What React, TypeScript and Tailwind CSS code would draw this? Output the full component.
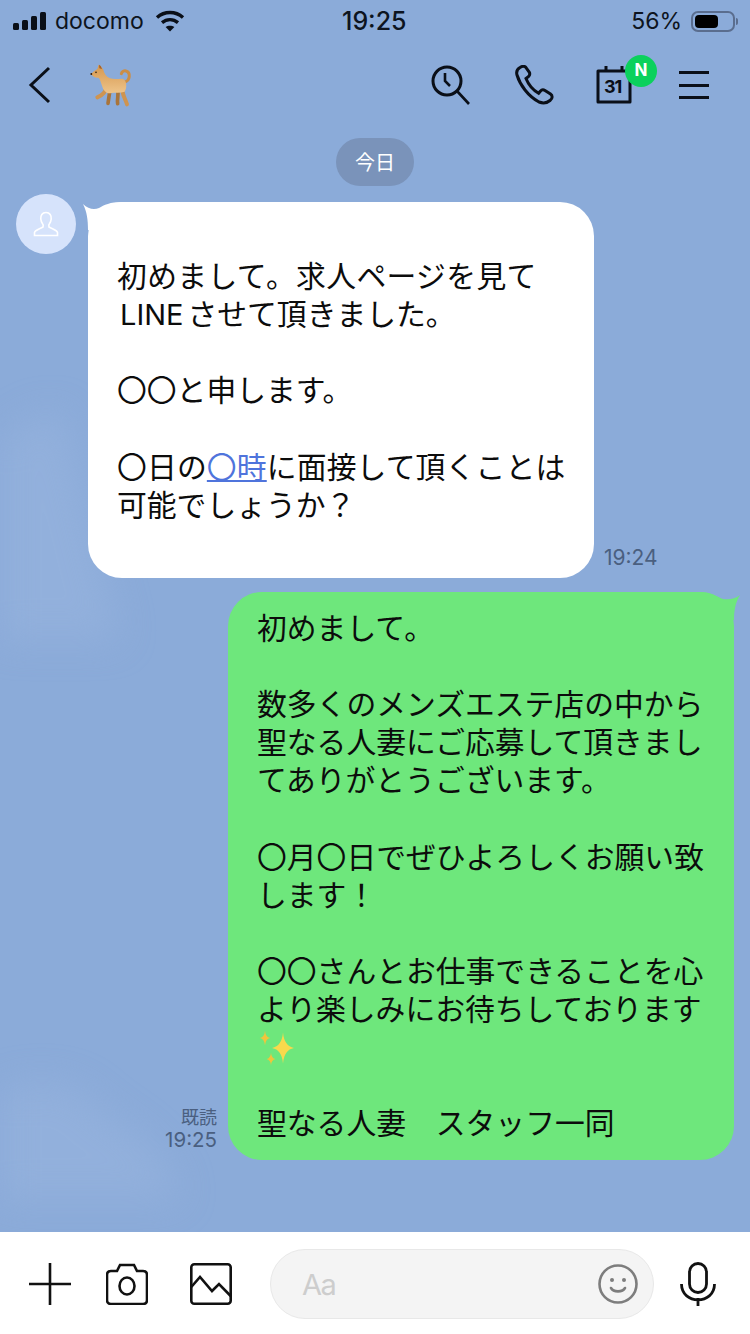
const JP = "font-['Noto_Sans_CJK_JP','Noto_Sans',sans-serif]"

const INCOMING: React.ReactNode[] = [
  '\u00a0',
  <span className="tracking-[0.35px]">初めまして。求人ページを見て</span>,
  <><span className="ml-[3px] mr-[4px] font-['Inter',sans-serif] text-[29px] leading-none">LINE</span>させて頂きました。</>,
  '\u00a0',
  '〇〇と申します。',
  '\u00a0',
  <span className="tracking-[0.15px]">〇日の<span className="text-[#4f74dc] underline underline-offset-2">〇時</span>に面接して頂くことは</span>,
  '可能でしょうか？',
  '\u00a0',
]

const OUTGOING: React.ReactNode[] = [
  '初めまして。',
  '\u00a0',
  '数多くのメンズエステ店の中から',
  '聖なる人妻にご応募して頂きまし',
  'てありがとうございます。',
  '\u00a0',
  '〇月〇日でぜひよろしくお願い致',
  'します！',
  '\u00a0',
  '〇〇さんとお仕事できることを心',
  'より楽しみにお待ちしております',
  <Sparkles />,
  '\u00a0',
  '聖なる人妻　スタッフ一同',
]

function Sparkles() {
  const star = 'M0 -14 Q1.1 -1.6 10 0 Q1.1 1.6 0 14 Q-1.1 1.6 -10 0 Q-1.1 -1.6 0 -14Z'
  return (
    <svg width="40" height="38" viewBox="0 0 40 38" className="block overflow-visible">
      <path d={star} transform="translate(26 22) scale(1.1)" fill="#f9d94c" />
      <path d={star} transform="translate(8 12) scale(.52)" fill="#f0c53c" />
      <path d={star} transform="translate(14 33) scale(.45)" fill="#f0c53c" />
    </svg>
  )
}

function StatusBar() {
  return (
    <div className="relative flex h-[42px] items-center justify-between pl-[13px] pr-[12px] font-['Inter',sans-serif] text-[#0d1420]">
      <div className="flex items-center">
        <svg width="34" height="18" viewBox="0 0 34 18" fill="#0a0f18">
          <rect x="0" y="11" width="6" height="7" rx="1.5" />
          <rect x="9" y="8" width="6" height="10" rx="1.5" />
          <rect x="18" y="4" width="6" height="14" rx="1.5" />
          <rect x="27" y="0" width="6" height="18" rx="1.5" />
        </svg>
        <span className="ml-[8px] text-[23px] leading-none">docomo</span>
        <svg width="30" height="22" viewBox="0 0 30 22" className="ml-[11px]" fill="none" stroke="#0a0f18" strokeWidth="3.4">
          <path d="M2 7.5 C9.5 0.8 20.5 0.8 28 7.5" />
          <path d="M7 12.6 C11.8 8.6 18.2 8.6 23 12.6" />
          <path d="M15 21.5 L10.6 17 C13 15.2 17 15.2 19.4 17Z" fill="#0a0f18" stroke="none" />
        </svg>
      </div>
      <span className="absolute left-[342px] text-[25px] font-medium leading-none">19:25</span>
      <div className="flex items-center">
        <span className="text-[23px] leading-none">56%</span>
        <div className="ml-[9px] flex h-[21px] w-[44px] items-center rounded-[7px] border-2 border-[#5a6d8e] pl-[2px]">
          <div className="h-[13px] w-[23px] rounded-[4px] bg-black" />
        </div>
        <div className="ml-[1px] h-[7px] w-[2px] rounded-r bg-[#5a6d8e]" />
      </div>
    </div>
  )
}

function Dog() {
  return (
    <svg width="44" height="44" viewBox="25 24 132 132">
      <defs>
        <linearGradient id="dog-fur" x1="0" y1="0" x2="0" y2="1">
          <stop offset="0" stopColor="#d5964c" />
          <stop offset="1" stopColor="#eec48a" />
        </linearGradient>
      </defs>
      {/* tail */}
      <path d="M130 82 C150 78 150 52 136 48 C130 46 124 50 122 56" fill="none" stroke="#cc8e46" strokeWidth="9" strokeLinecap="round" />
      {/* far legs */}
      <path d="M88 104 L82 145 M110 104 C116 120 108 130 111 146" fill="none" stroke="#a9743a" strokeWidth="11" strokeLinecap="round" />
      {/* near legs */}
      <path d="M76 96 C76 113 62 122 50 127 M126 96 C122 118 134 130 139 148" fill="none" stroke="#cf9450" strokeWidth="12" strokeLinecap="round" />
      {/* body and head */}
      <path d="M31 57 C37 50 45 46 50 42 L54 29 L60 33 L68 44 C70 56 78 66 88 70 C102 75 118 70 128 72 C138 78 140 98 132 110 C118 114 104 112 92 114 C78 118 68 106 64 92 C60 80 58 70 52 68 C44 69 36 64 31 57Z" fill="url(#dog-fur)" />
      <path d="M55 29 L60 33 L64 42 L56 40Z" fill="#a4622c" />
      <circle cx="46" cy="52" r="2.4" fill="#2c1a0c" />
      <circle cx="32" cy="57" r="2.8" fill="#2c1a0c" />
    </svg>
  )
}

function NavBar() {
  return (
    <div className="flex h-[86px] items-center text-black">
      <svg width="24" height="38" viewBox="0 0 24 38" className="ml-[28px]" fill="none" stroke="#0a0f18" strokeWidth="3">
        <path d="M21 2 L3 19 L21 36" />
      </svg>
      <div className="ml-[37px]">
        <Dog />
      </div>
      <svg width="40" height="40" viewBox="0 0 40 40" className="ml-[298px]" fill="none" stroke="#0a0f18" strokeWidth="3">
        <circle cx="16" cy="16" r="14" />
        <path d="M14 8 L14 16 L19 21 M26 26 L38 39" strokeWidth="2.6" />
      </svg>
      <svg width="40" height="40" viewBox="0 0 40 40" className="ml-[44px]" fill="none" stroke="#0a0f18" strokeWidth="3">
        <path d="M5 2.5 C2.5 4 1 6.5 2 10 C5 20 13 31 24 37 C28 38.6 32 38 35 35.5 C38 33 37.5 30.5 35.5 29 L30 25.5 C28 24.2 26.5 24.8 25.3 26.2 L23.6 28.3 C18 25 13 18.5 11 13.5 L13.6 11.4 C15 10 15 8.5 14.2 7 L11 2.6 C9.5 .9 7 1.2 5 2.5Z" />
      </svg>
      <div className="relative ml-[41px] h-[40px] w-[36px]">
        <svg width="36" height="40" viewBox="0 0 36 40" fill="none" stroke="#0a0f18" strokeWidth="3">
          <path d="M2 6 H34 V37 H2Z" strokeLinejoin="round" />
          <path d="M10 1 V6 M26 1 V6" />
        </svg>
        <span className="absolute left-[8px] top-[10px] font-['Inter',sans-serif] text-[18px] font-bold leading-[24px] tracking-[-1px] text-[#0a0f18]">31</span>
        <span className="absolute left-[29px] top-[-10px] flex h-[32px] w-[32px] items-center justify-center rounded-full bg-[#0bd15c] font-['Inter',sans-serif] text-[17px] font-bold text-white">N</span>
      </div>
      <div className="ml-[47px] flex h-[28px] w-[30px] flex-col justify-between">
        <div className="h-[3px] bg-[#0a0f18]" />
        <div className="h-[3px] bg-[#0a0f18]" />
        <div className="h-[3px] bg-[#0a0f18]" />
      </div>
    </div>
  )
}

function MessageLines({ lines }: { lines: React.ReactNode[] }) {
  return (
    <div className={`${JP} text-[29.8px] leading-[38.1px] text-[#0c0c0c]`}>
      {lines.map((line, i) => (
        <div key={i} className="whitespace-nowrap">{line}</div>
      ))}
    </div>
  )
}

function IncomingRow() {
  return (
    <div className="mt-[8px] flex pl-[16px]">
      <div className="flex h-[60px] w-[60px] shrink-0 items-center justify-center rounded-full bg-[#d6e3fb]">
        <svg width="26" height="26" viewBox="0 0 26 26" fill="none" stroke="#fff" strokeWidth="1.6">
          <path d="M13 1.5 C9 1.5 7.5 4.5 7.8 8 C8 11 9.5 12.6 10.2 14 L10 16 C7 18 2.5 19 1.5 21.5 V24.5 H24.5 V21.5 C23.5 19 19 18 16 16 L15.8 14 C16.5 12.6 18 11 18.2 8 C18.5 4.5 17 1.5 13 1.5Z" />
        </svg>
      </div>
      <div className="relative ml-[12px] mt-[8px] h-[376px] w-[506px] rounded-[34px] bg-white pl-[29px] pt-[15px]">
        <svg width="40" height="28" viewBox="0 0 40 28" className="absolute left-[-6px] top-0" fill="#fff">
          <path d="M1 2 C6 7 12 8 17 6 C22 3 28 0 40 0 L40 28 L6 28 C6 18 5 10 1 2Z" />
        </svg>
        <div className="relative">
          <MessageLines lines={INCOMING} />
        </div>
      </div>
      <span className="ml-[10px] mb-[9px] self-end font-['Inter',sans-serif] text-[21px] leading-[22px] text-[#4a5f80]">19:24</span>
    </div>
  )
}

function OutgoingRow() {
  return (
    <div className="mt-[14px] flex justify-end pr-[16px]">
      <div className={`${JP} mb-[8px] mr-[11px] self-end text-right text-[#4a5f80]`}>
        <div className="text-[18px] leading-[24px]">既読</div>
        <div className="font-['Inter',sans-serif] text-[20.5px] leading-[24px]">19:25</div>
      </div>
      <div className="relative h-[568px] w-[506px] rounded-[34px] bg-[#6ee77c] pl-[29px] pt-[15px]">
        <svg width="41" height="28" viewBox="0 0 41 28" className="absolute right-[-7px] top-0" fill="#6ee77c">
          <path d="M40 3 C35 7 29 8 23 7 C17 5 12 0 0 0 L0 28 L34 28 C34 20 35 11 40 3Z" />
        </svg>
        <div className="relative">
          <MessageLines lines={OUTGOING} />
        </div>
      </div>
    </div>
  )
}

function InputBar() {
  return (
    <div className="relative flex h-[102px] items-center bg-white pt-[2px]">
      <svg width="42" height="44" viewBox="0 0 42 44" className="ml-[29px]" stroke="#111" strokeWidth="2.6">
        <path d="M21 1 V43 M0 22 H42" />
      </svg>
      <svg width="42" height="42" viewBox="0 0 42 42" className="ml-[35px]" fill="none" stroke="#111" strokeWidth="2.6">
        <path d="M5 8 H11 L14 2 H28 L31 8 H37 C39.5 8 41 9.5 41 12 V37 C41 39.5 39.5 41 37 41 H5 C2.5 41 1 39.5 1 37 V12 C1 9.5 2.5 8 5 8Z" />
        <ellipse cx="21" cy="23" rx="7.5" ry="8.5" />
      </svg>
      <svg width="42" height="42" viewBox="0 0 42 42" className="ml-[42px]" fill="none" stroke="#111" strokeWidth="2.6">
        <rect x="1.3" y="1.3" width="39.4" height="39.4" rx="3" />
        <path d="M1.3 24 L10 14 L22 28 L29 21 L40.7 33" />
      </svg>
      <div className="ml-[38px] flex h-[70px] w-[384px] items-center justify-between rounded-[35px] border border-[#e8e8e8] bg-[#f4f4f4] pl-[31px] pr-[15px]">
        <span className="font-['Inter',sans-serif] text-[29px] leading-none tracking-[-1.5px] text-[#cdcdcd]">Aa</span>
        <svg width="40" height="40" viewBox="0 0 40 40" fill="none" stroke="#7d7d7d" strokeWidth="2.6">
          <circle cx="20" cy="20" r="18.5" />
          <circle cx="14" cy="16" r="2" fill="#7d7d7d" stroke="none" />
          <circle cx="26" cy="16" r="2" fill="#7d7d7d" stroke="none" />
          <path d="M13 24 C15.5 28.5 24.5 28.5 27 24" strokeLinecap="round" />
        </svg>
      </div>
      <svg width="36" height="44" viewBox="0 0 36 44" className="ml-[26px]" fill="none" stroke="#111" strokeWidth="2.8">
        <rect x="9.5" y="1.5" width="17" height="29" rx="8.5" />
        <path d="M1.5 22 C1.5 43 34.5 43 34.5 22 M18 36 V44" />
      </svg>
    </div>
  )
}

export default function App() {
  return (
    <div className="relative flex h-[1334px] w-[750px] flex-col overflow-hidden bg-[#8babd9]">
      {/* faint clouds in the chat wallpaper */}
      <svg width="750" height="1232" viewBox="0 0 750 1232" className="absolute inset-0 blur-[18px]" fill="#9ab5df">
        <path d="M-40 640 L-40 470 C0 450 30 405 65 415 L90 520 L120 640Z" opacity=".5" />
        <path d="M-40 1200 L-40 1110 C10 1080 70 1070 100 1110 C130 1130 170 1150 180 1200Z" opacity=".5" />
      </svg>
      <div className="relative flex flex-1 flex-col">
        <StatusBar />
        <NavBar />
        <div className="mt-[10px] self-center">
          <div className={`${JP} flex h-[48px] w-[78px] items-center justify-center rounded-[24px] bg-[#7a93ba] text-[20px] text-white`}>今日</div>
        </div>
        <IncomingRow />
        <OutgoingRow />
      </div>
      <InputBar />
    </div>
  )
}
